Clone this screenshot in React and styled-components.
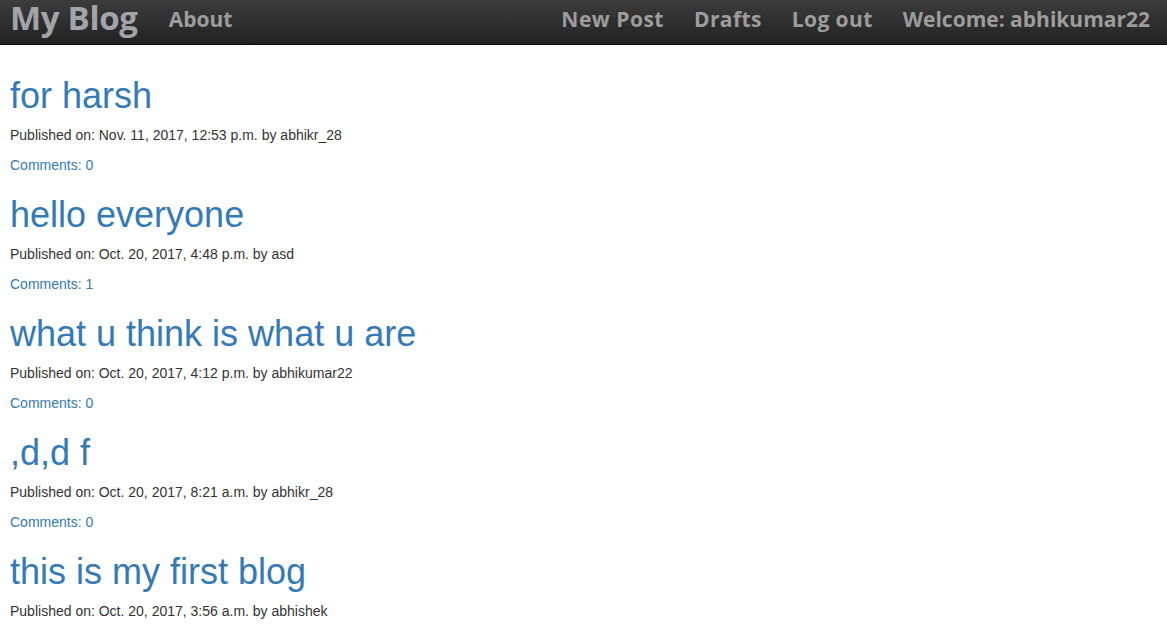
import React from "react";
import styled, { createGlobalStyle } from "styled-components";

const Global = createGlobalStyle`
  html, body { margin: 0; padding: 0; background: #fff; }
  body {
    font-family: "Liberation Sans", Arial, Helvetica, sans-serif;
    font-size: 14px;
    line-height: 1.42857143;
    color: #333;
  }
`;

const Navbar = styled.nav`
  height: 44px;
  box-sizing: content-box;
  border-bottom: 1px solid #080808;
  background: linear-gradient(to bottom, #3c3c3c 0%, #222 100%);
  display: flex;
  align-items: flex-start;
  justify-content: space-between;
  padding: 0 2px 0 10px;
  font-family: "Open Sans", sans-serif;
  font-weight: 700;
  color: #9d9d9d;
`;

const Group = styled.div`
  display: flex;
  align-items: center;
  height: 38px;
`;

const Brand = styled.a`
  font-size: 33px;
  line-height: 40px;
  margin-top: -2px;
  letter-spacing: -0.3px;
  color: #a3a3aa;
  text-decoration: none;
  margin-right: 16px;
`;

const NavLink = styled.a`
  font-size: 21px;
  line-height: 38px;
  padding: 0 15px;
  color: #9d9d9d;
  text-decoration: none;
  letter-spacing: ${(p) => p.$ls || "0"};
`;

const Main = styled.main`
  padding: 11px 10px 0 10px;
`;

const Title = styled.h1`
  font-family: "Liberation Sans", Arial, sans-serif;
  font-size: 36px;
  font-weight: 400;
  line-height: 39px;
  margin: 20px 0 10px;
  a { color: #337ab7; text-decoration: none; }
`;

const Meta = styled.p`
  margin: 0 0 10px;
  font-size: 14px;
  line-height: 20px;
  color: #333;
`;

const CommentLink = styled.a`
  color: #337ab7;
  text-decoration: none;
`;

const posts = [
  { title: "for harsh", date: "Nov. 11, 2017, 12:53 p.m.", author: "abhikr_28", comments: 0 },
  { title: "hello everyone", date: "Oct. 20, 2017, 4:48 p.m.", author: "asd", comments: 1 },
  { title: "what u think is what u are", date: "Oct. 20, 2017, 4:12 p.m.", author: "abhikumar22", comments: 0 },
  { title: ",d,d f", date: "Oct. 20, 2017, 8:21 a.m.", author: "abhikr_28", comments: 0 },
  { title: "this is my first blog", date: "Oct. 20, 2017, 3:56 a.m.", author: "abhishek", comments: 0 },
];

export default function App() {
  return (
    <>
      <Global />
      <Navbar>
        <Group>
          <Brand href="#">My Blog</Brand>
          <NavLink href="#">About</NavLink>
        </Group>
        <Group>
          <NavLink href="#" $ls="0.5px">New Post</NavLink>
          <NavLink href="#" $ls="0.4px">Drafts</NavLink>
          <NavLink href="#" $ls="0.4px">Log out</NavLink>
          <NavLink href="#">Welcome: abhikumar22</NavLink>
        </Group>
      </Navbar>
      <Main>
        {posts.map((p, i) => (
          <article key={i}>
            <Title><a href="#">{p.title}</a></Title>
            <Meta>Published on: {p.date} by {p.author}</Meta>
            <Meta><CommentLink href="#">Comments: {p.comments}</CommentLink></Meta>
          </article>
        ))}
      </Main>
    </>
  );
}
